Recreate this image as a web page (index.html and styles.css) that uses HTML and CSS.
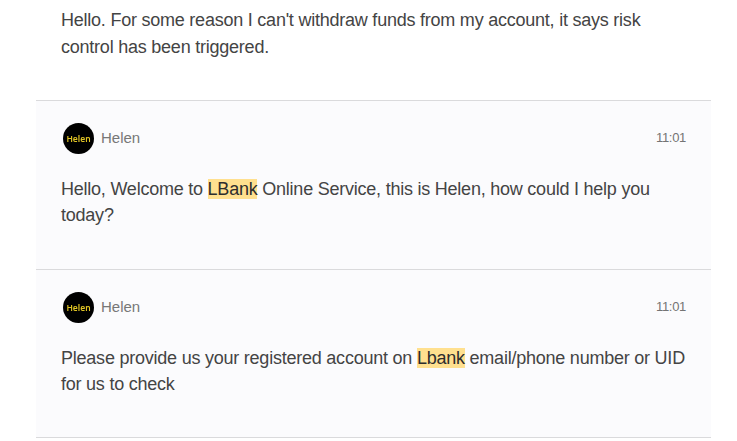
FILE: index.html
```html
<!DOCTYPE html>
<html lang="en">

<head>
  <meta charset="UTF-8">
  <meta name="viewport" content="width=device-width, initial-scale=1">
  <title>Chat transcript</title>
  <link rel="stylesheet" href="styles.css">
</head>

<body>

  <div class="transcript">
    <div class="message visitor">
      <p class="text">Hello. For some reason I can't withdraw funds from my account, it says risk<br>control has been triggered.</p>
    </div>

    <div class="message agent">
      <div class="meta">
        <span class="avatar">Helen</span>
        <span class="name">Helen</span>
        <span class="time">11:01</span>
      </div>
      <p class="text">Hello, Welcome to <mark>LBank</mark> Online Service, this is Helen, how could I help you<br>today?</p>
    </div>

    <div class="message agent last">
      <div class="meta">
        <span class="avatar">Helen</span>
        <span class="name">Helen</span>
        <span class="time">11:01</span>
      </div>
      <p class="text">Please provide us your registered account on <mark>Lbank</mark> email/phone number or UID<br>for us to check</p>
    </div>
  </div>

</body>

</html>
```
FILE: styles.css
```css
* {
  box-sizing: border-box;
  margin: 0;
  padding: 0;
}

body {
  font-family: "Liberation Sans", Arial, sans-serif;
  background: #fff;
  color: #444;
  overflow: hidden;
}

.transcript {
  width: 675px;
  margin-left: 36px;
}

.message {
  padding: 0 25px;
}

.visitor {
  height: 100px;
  padding-top: 7px;
}

.visitor .text {
  line-height: 27px;
}

.agent {
  height: 169px;
  padding-top: 22px;
  background: #fbfbfd;
  border-top: 1px solid #dadadc;
}

.last {
  border-bottom: 1px solid #dadadc;
}

.meta {
  display: flex;
  align-items: center;
  height: 31px;
  margin-bottom: 22px;
}

.avatar {
  width: 31px;
  height: 31px;
  margin: 0 7px 0 2px;
  border-radius: 50%;
  background: #000;
  color: #e0c424;
  font: 600 8.5px/32px "Noto Sans", sans-serif;
  text-align: center;
  will-change: transform;
}

.name {
  padding-bottom: 2px;
  color: #777;
  font-size: 15px;
}

.time {
  margin-left: auto;
  padding-bottom: 2px;
  color: #747474;
  font-size: 13px;
  letter-spacing: -0.3px;
}

.text {
  font-size: 18px;
  line-height: 26px;
  letter-spacing: -0.23px;
  white-space: nowrap;
}

mark {
  background: #ffe08f;
  color: #2d2d2d;
}
```
